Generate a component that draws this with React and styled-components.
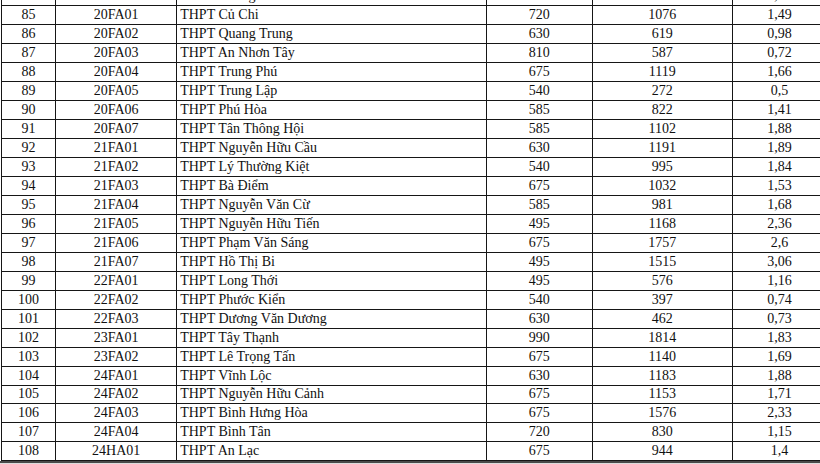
import React from "react";
import styled, { createGlobalStyle } from "styled-components";

const Global = createGlobalStyle`
  html, body { margin: 0; padding: 0; background: #fff; overflow: hidden; }
  body { font-family: "Liberation Serif", "Times New Roman", serif; color: #111; }
`;

const Page = styled.div`
  width: 820px;
  height: 464px;
  overflow: hidden;
  display: flex;
  flex-direction: column;
`;

const Table = styled.table`
  border-collapse: collapse;
  table-layout: fixed;
  width: 826px;
  margin: -13.5px 0 0 1px;
  font-size: 14px;
  flex: none;
`;

const Row = styled.tr`
  height: 18.96px;
`;

const Cell = styled.td`
  border: 1px solid #161616;
  padding: 0 ${(p) => (p.$left ? "3px" : "0")};
  text-align: ${(p) => (p.$left ? "left" : "center")};
  white-space: nowrap;
  line-height: 16px;
  vertical-align: middle;
`;

const Footer = styled.div`
  flex: 1;
  border-top: 2px solid #4a4a4a;
  background: #dcdcdc;
`;

const rows = [
  ["84", "19FA03", "THPT An Nghĩa", "450", "420", "0,93"],
  ["85", "20FA01", "THPT Củ Chi", "720", "1076", "1,49"],
  ["86", "20FA02", "THPT Quang Trung", "630", "619", "0,98"],
  ["87", "20FA03", "THPT An Nhơn Tây", "810", "587", "0,72"],
  ["88", "20FA04", "THPT Trung Phú", "675", "1119", "1,66"],
  ["89", "20FA05", "THPT Trung Lập", "540", "272", "0,5"],
  ["90", "20FA06", "THPT Phú Hòa", "585", "822", "1,41"],
  ["91", "20FA07", "THPT Tân Thông Hội", "585", "1102", "1,88"],
  ["92", "21FA01", "THPT Nguyễn Hữu Cầu", "630", "1191", "1,89"],
  ["93", "21FA02", "THPT Lý Thường Kiệt", "540", "995", "1,84"],
  ["94", "21FA03", "THPT Bà Điểm", "675", "1032", "1,53"],
  ["95", "21FA04", "THPT Nguyễn Văn Cừ", "585", "981", "1,68"],
  ["96", "21FA05", "THPT Nguyễn Hữu Tiến", "495", "1168", "2,36"],
  ["97", "21FA06", "THPT Phạm Văn Sáng", "675", "1757", "2,6"],
  ["98", "21FA07", "THPT Hồ Thị Bi", "495", "1515", "3,06"],
  ["99", "22FA01", "THPT Long Thới", "495", "576", "1,16"],
  ["100", "22FA02", "THPT Phước Kiển", "540", "397", "0,74"],
  ["101", "22FA03", "THPT Dương Văn Dương", "630", "462", "0,73"],
  ["102", "23FA01", "THPT Tây Thạnh", "990", "1814", "1,83"],
  ["103", "23FA02", "THPT Lê Trọng Tấn", "675", "1140", "1,69"],
  ["104", "24FA01", "THPT Vĩnh Lộc", "630", "1183", "1,88"],
  ["105", "24FA02", "THPT Nguyễn Hữu Cảnh", "675", "1153", "1,71"],
  ["106", "24FA03", "THPT Bình Hưng Hòa", "675", "1576", "2,33"],
  ["107", "24FA04", "THPT Bình Tân", "720", "830", "1,15"],
  ["108", "24HA01", "THPT An Lạc", "675", "944", "1,4"],
];

const widths = [54, 121, 309, 106, 140, 94];

export default function App() {
  return (
    <Page>
      <Global />
      <Table>
        <colgroup>
          {widths.map((w, i) => (
            <col key={i} style={{ width: w }} />
          ))}
        </colgroup>
        <tbody>
          {rows.map((r) => (
            <Row key={r[0]}>
              {r.map((c, i) => (
                <Cell key={i} $left={i === 2}>
                  {c}
                </Cell>
              ))}
            </Row>
          ))}
        </tbody>
      </Table>
      <Footer />
    </Page>
  );
}
